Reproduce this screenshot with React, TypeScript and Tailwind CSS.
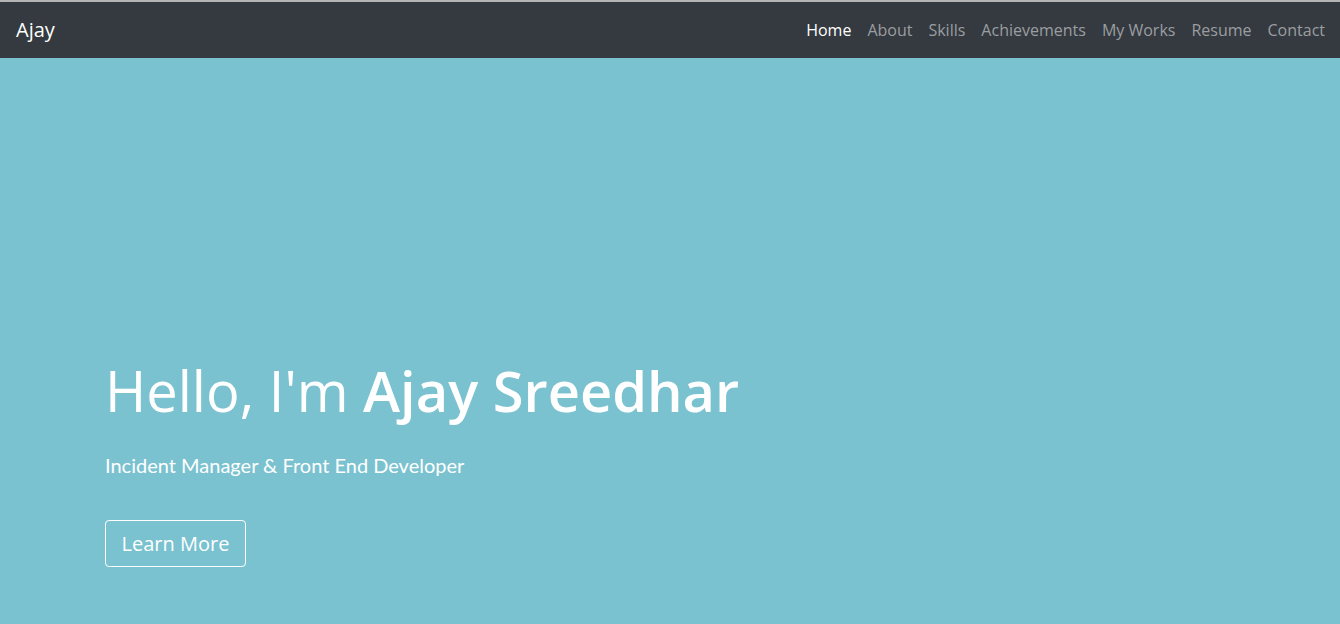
import React from 'react';

const links = ["Home", "About", "Skills", "Achievements", "My Works", "Resume", "Contact"];

export default function App() {
  return (
    <div className="min-h-screen flex flex-col bg-[#7ac2d0] font-['Open_Sans',sans-serif]">
      <nav className="h-[58px] border-t-2 border-[#b5b5b5] bg-[#343a40] flex items-center justify-between pl-4 pr-[7px]">
        <a className="text-[20px] text-white">Ajay</a>
        <ul className="flex items-center">
          {links.map((link, i) => (
            <li key={link}>
              <a className={`block px-2 text-[16px] ${i === 0 ? "text-white" : "text-[#9b9ea1]"}`}>{link}</a>
            </li>
          ))}
        </ul>
      </nav>

      <section className="flex-1 flex flex-col justify-end px-[105px] pb-[57px]">
        <h1 className="text-[56px] leading-[1.2] text-white font-normal">
          Hello, I'm <span className="font-semibold">Ajay Sreedhar</span>
        </h1>
        <p className="mt-[26px] text-[20px] text-white font-['Lato',sans-serif]">
          Incident Manager &amp; Front End Developer
        </p>
        <a className="mt-[40px] w-[141px] h-[47px] flex items-center justify-center border border-white rounded text-[20px] text-white">
          Learn More
        </a>
      </section>
    </div>
  );
}
